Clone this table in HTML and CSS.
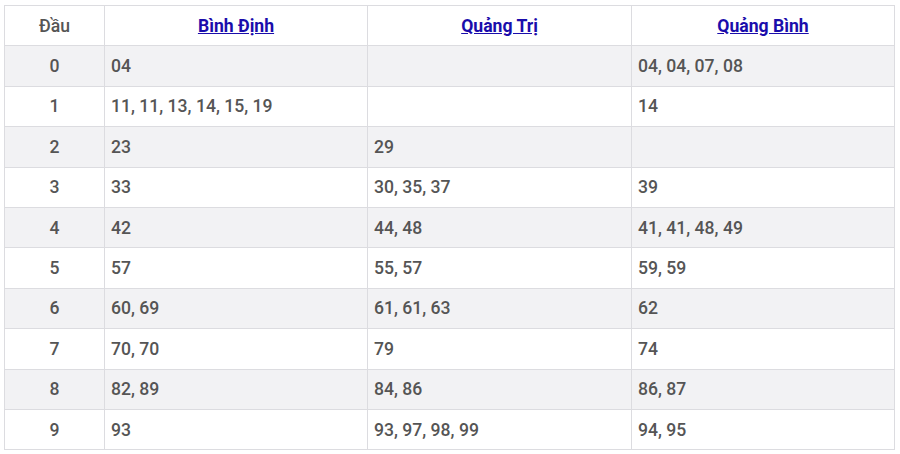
FILE: index.html
```html
<!DOCTYPE html>
<html lang="vi">
<head>
<meta charset="utf-8">
<link rel="stylesheet" href="styles.css">
</head>
<body>
<table class="loto">
  <thead>
    <tr>
      <th class="dau">Đầu</th>
      <th><a href="#">Bình Định</a></th>
      <th><a href="#">Quảng Trị</a></th>
      <th><a href="#">Quảng Bình</a></th>
    </tr>
  </thead>
  <tbody>
    <tr><td class="dau">0</td><td>04</td><td></td><td>04, 04, 07, 08</td></tr>
    <tr><td class="dau">1</td><td>11, 11, 13, 14, 15, 19</td><td></td><td>14</td></tr>
    <tr><td class="dau">2</td><td>23</td><td>29</td><td></td></tr>
    <tr><td class="dau">3</td><td>33</td><td>30, 35, 37</td><td>39</td></tr>
    <tr><td class="dau">4</td><td>42</td><td>44, 48</td><td>41, 41, 48, 49</td></tr>
    <tr><td class="dau">5</td><td>57</td><td>55, 57</td><td>59, 59</td></tr>
    <tr><td class="dau">6</td><td>60, 69</td><td>61, 61, 63</td><td>62</td></tr>
    <tr><td class="dau">7</td><td>70, 70</td><td>79</td><td>74</td></tr>
    <tr><td class="dau">8</td><td>82, 89</td><td>84, 86</td><td>86, 87</td></tr>
    <tr><td class="dau">9</td><td>93</td><td>93, 97, 98, 99</td><td>94, 95</td></tr>
  </tbody>
</table>
</body>
</html>
```
FILE: styles.css
```css
html, body {
  margin: 0;
  background: #fff;
}
body {
  padding: 5px 5px 0 4px;
  font-family: Roboto, "Liberation Sans", sans-serif;
}
.loto {
  width: 891px;
  border-collapse: collapse;
  table-layout: fixed;
  font-size: 17.6px;
  font-weight: 500;
  color: #555;
}
.loto th, .loto td {
  border: 1px solid #dcdce0;
  height: 40.4px;
  padding: 0 6px;
  text-align: left;
  box-sizing: border-box;
}
.loto th {
  text-align: center;
  font-weight: 700;
}
.loto th:nth-child(1) { width: 100px; }
.loto th:nth-child(2) { width: 263px; }
.loto th:nth-child(3) { width: 264px; }
.loto .dau {
  text-align: center;
}
.loto th.dau {
  font-weight: 500;
}
.loto a {
  color: #1a0dab;
  text-decoration: underline;
}
.loto tbody tr:nth-child(odd) {
  background: #f2f2f4;
}
```
